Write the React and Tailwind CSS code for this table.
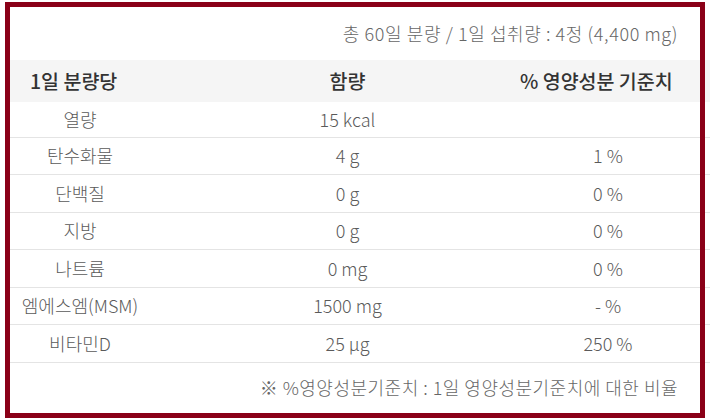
const rows = [
  { name: "열량", amount: "15 kcal", pct: "" },
  { name: "탄수화물", amount: "4 g", pct: "1 %" },
  { name: "단백질", amount: "0 g", pct: "0 %" },
  { name: "지방", amount: "0 g", pct: "0 %" },
  { name: "나트륨", amount: "0 mg", pct: "0 %" },
  { name: "엠에스엠(MSM)", amount: "1500 mg", pct: "- %" },
  { name: "비타민D", amount: "25 μg", pct: "250 %" },
];

const font = { fontFamily: '"Noto Sans CJK KR", "Noto Sans", sans-serif' };

const App = () => {
  return (
    <div className="relative w-[710px] h-[419px] bg-white overflow-hidden" style={font}>
      {/* table content */}
      <div className="ml-[10px] mt-[7px] w-[700px]">
        <div className="h-[53px] flex items-center justify-end pr-[32px] text-[18px] tracking-[0.6px] font-light text-[#666]">
          총 60일 분량 / 1일 섭취량 : 4정 (4,400 mg)
        </div>

        <div className="h-[42px] bg-[#f5f5f5] grid grid-cols-[140px_395px_165px] items-center text-[19.5px] font-medium text-[#333]">
          <div className="pl-[20px]">1일 분량당</div>
          <div className="text-center">함량</div>
          <div className="-ml-[25px]">% 영양성분 기준치</div>
        </div>

        {rows.map((r, i) => (
          <div
            key={r.name}
            className={
              "grid grid-cols-[140px_395px_126px] items-center border-b border-[#e4e4e4] text-[18px] font-light text-[#5a5a5a] " +
              (i === 0 ? "h-[35.5px]" : "h-[37.5px]")
            }
          >
            <div className="text-center whitespace-nowrap">{r.name}</div>
            <div className="text-center">{r.amount}</div>
            <div className="text-center">{r.pct}</div>
          </div>
        ))}

        <div className="h-[50px] flex items-center justify-end pr-[32px] text-[18px] tracking-[0.5px] font-light text-[#666]">
          ※ %영양성분기준치 : 1일 영양성분기준치에 대한 비율
        </div>
      </div>

      {/* red highlight frame drawn over the screenshot */}
      <div className="absolute left-[5px] top-[2px] w-[700px] h-[416px] border-[5px] border-[#8a0018] pointer-events-none" />
    </div>
  );
};

export default App;
